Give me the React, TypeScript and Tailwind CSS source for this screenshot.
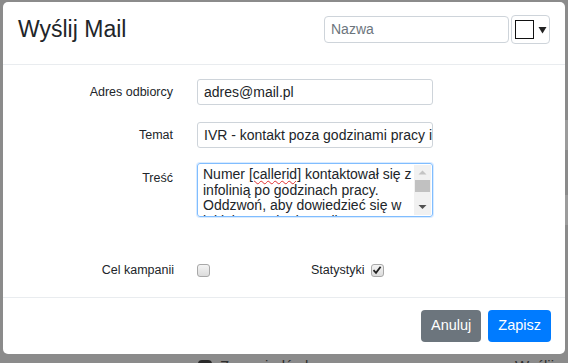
import React from "react";

function Checkbox({ checked }: { checked?: boolean }) {
  return (
    <div className="w-[13px] h-[13px] rounded-[3px] border border-[#a8a8a8] bg-gradient-to-b from-[#f4f4f4] to-[#dcdcdc] flex items-center justify-center">
      {checked && (
        <svg width="10" height="10" viewBox="0 0 10 10">
          <path d="M1.5 5.2 L4 7.8 L8.6 1.8" fill="none" stroke="#222" strokeWidth="1.8" />
        </svg>
      )}
    </div>
  );
}

export default function App() {
  const font = { fontFamily: '"Liberation Sans", Arial, sans-serif' };
  return (
    <div className="w-[568px] h-[363px] bg-[#8b8b8b] overflow-hidden relative" style={font}>
      {/* faint background page below overlay */}
      <div className="absolute left-[198px] top-[355px] flex items-center gap-2 text-[15px] text-[#2e2e2e]">
        <span className="w-[14px] h-[12px] bg-[#2a2a2a] rounded-sm" />
        <span>Zapowiedź głosem</span>
      </div>
      <div className="absolute left-[490px] top-[355px] flex items-center gap-[10px] text-[15px] text-[#2e2e2e]">
        <span className="w-[20px] h-[14px] bg-[#1e1e1e]" />
        <span>Wyślij Mail</span>
      </div>
      <div className="absolute left-[565px] top-[120px] w-[3px] h-[30px] bg-[#9c9c9c]" />
      <div className="absolute left-[565px] top-[195px] w-[3px] h-[30px] bg-[#9c9c9c]" />

      <div className="relative ml-[3px] mt-[2px] w-[562px] h-[352px] bg-white rounded-[5px] flex flex-col">
        {/* header */}
        <div className="h-[63px] border-b border-[#e9ecef] flex items-start pl-[15px] pr-[15px]">
          <div className="text-[23px] text-[#212529] leading-none mt-[16px]">Wyślij Mail</div>
          <div className="ml-auto flex items-center gap-[2px] mt-[13px]">
            <div className="w-[185px] h-[27px] border border-[#ced4da] rounded-[4px] flex items-center px-[6px] text-[14px] text-[#6c757d]">
              Nazwa
            </div>
            <div className="w-[39px] h-[29px] border border-[#ced4da] rounded-[4px] flex items-center pl-[3px] gap-[4px]">
              <div className="w-[19px] h-[19px] border border-[#111] bg-white" />
              <svg width="9" height="8" viewBox="0 0 9 8">
                <path d="M0.5 1 H8.5 L4.5 7.5 Z" fill="#222" />
              </svg>
            </div>
          </div>
        </div>

        {/* body */}
        <div className="flex-1 flex flex-col pt-[14px]">
          <div className="flex items-center h-[26px]">
            <div className="w-[170px] text-right text-[12.5px] text-[#212529]">Adres odbiorcy</div>
            <div className="ml-[24px] w-[236px] h-[26px] border border-[#ced4da] rounded-[3px] flex items-center px-[6px] text-[14px] text-[#212529]">
              adres@mail.pl
            </div>
          </div>
          <div className="flex items-center h-[26px] mt-[17px]">
            <div className="w-[170px] text-right text-[12.5px] text-[#212529]">Temat</div>
            <div className="ml-[24px] w-[236px] h-[26px] border border-[#ced4da] rounded-[3px] flex items-center px-[6px] text-[14px] text-[#212529] overflow-hidden whitespace-nowrap">
              IVR - kontakt poza godzinami pracy infolinii
            </div>
          </div>
          <div className="flex items-start mt-[15px]">
            <div className="w-[170px] text-right text-[12.5px] text-[#212529] mt-[6px]">Treść</div>
            <div className="relative ml-[24px] w-[236px] h-[54px] border border-[#80bdff] rounded-[3px] shadow-[0_0_0_1px_rgba(0,123,255,0.15)] overflow-hidden">
              <div className="pl-[5px] pr-[20px] pt-[3px] text-[14px] leading-[15.5px] text-[#212529]">
                Numer <span className="underline decoration-wavy decoration-[#e03030] decoration-1">[callerid]</span> kontaktował się z infolinią po godzinach pracy. Oddzwoń, aby dowiedzieć się w jakiej sprawie dzwonił.
              </div>
              <div className="absolute right-[1px] top-[1px] bottom-[1px] w-[17px] bg-[#f1f1f1] flex flex-col items-center">
                <svg width="17" height="15" viewBox="0 0 17 15">
                  <path d="M4.5 9.5 L8.5 5.5 L12.5 9.5 Z" fill="#c4c4c4" />
                </svg>
                <div className="w-[15px] h-[12px] bg-[#c1c1c1]" />
                <div className="flex-1" />
                <svg width="17" height="15" viewBox="0 0 17 15">
                  <path d="M4.5 5 L8.5 9 L12.5 5 Z" fill="#505050" />
                </svg>
              </div>
            </div>
          </div>
          <div className="flex items-center mt-[45px] h-[16px]">
            <div className="w-[171px] text-right text-[12.5px] text-[#212529]">Cel kampanii</div>
            <div className="ml-[23px]">
              <Checkbox />
            </div>
            <div className="ml-[101px] text-[12.5px] text-[#212529]">Statystyki</div>
            <div className="ml-[6px]">
              <Checkbox checked />
            </div>
          </div>
        </div>

        {/* footer */}
        <div className="h-[57px] border-t border-[#e9ecef] flex items-center justify-end pr-[14px] gap-[7px]">
          <div className="h-[32px] px-[10px] rounded-[4px] bg-[#6c757d] text-white text-[14.5px] flex items-center">Anuluj</div>
          <div className="h-[32px] px-[10px] rounded-[4px] bg-[#007bff] text-white text-[14.5px] flex items-center">Zapisz</div>
        </div>
      </div>
    </div>
  );
}
